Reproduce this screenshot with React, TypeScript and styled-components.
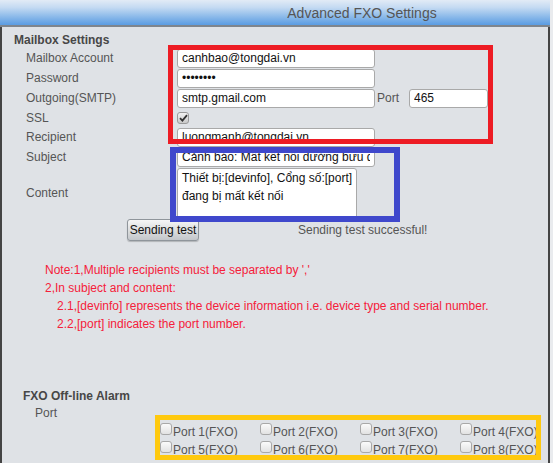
import React from 'react';
import styled, { createGlobalStyle } from 'styled-components';

const GlobalStyle = createGlobalStyle`
  html, body {
    margin: 0;
    padding: 0;
    background: #e9ebee;
    overflow: hidden;
  }
  body {
    font-family: 'Liberation Sans', Arial, sans-serif;
    font-size: 12px;
    color: #555;
  }
`;

const Page = styled.div`
  position: relative;
  width: 550px;
  height: 463px;
  display: flex;
  flex-direction: column;
  overflow: hidden;
`;

const Header = styled.div`
  flex: none;
  height: 23px;
  padding: 2px 0 0 174px;
  border-bottom: 2px solid #7e858d;
  background: linear-gradient(#e2ebf6 0%, #c4daf2 30%, #8ebbea 65%, #5a9ce2 100%);
  color: #555;
  font-size: 14px;
  line-height: 23px;
  text-align: center;
`;

const Panel = styled.div`
  flex: 1;
  background: #dfe2e6;
  border-left: 2px solid #444;
  border-right: 2px solid #444;
`;

const SectionTitle = styled.div<{ $indent: number; $top: number }>`
  padding-left: ${p => p.$indent}px;
  margin-top: ${p => p.$top}px;
  font-weight: bold;
  color: #474747;
  line-height: 16px;
`;

const Form = styled.div`
  display: flex;
  flex-direction: column;
  padding-left: 24px;
`;

const Row = styled.div<{ $h: number }>`
  display: flex;
  align-items: center;
  height: ${p => p.$h}px;
`;

const Label = styled.span`
  flex: none;
  width: 151px;
  color: #555;
`;

const TextInput = styled.input<{ $w: number }>`
  box-sizing: border-box;
  width: ${p => p.$w}px;
  height: 19px;
  margin: 0;
  padding: 0 4px;
  border: 1px solid #a9a9a9;
  border-radius: 3px;
  background: #fff;
  font-family: 'Liberation Sans', Arial, sans-serif;
  font-size: 12px;
  color: #111;
  outline: none;
`;

const Area = styled.textarea`
  box-sizing: border-box;
  width: 180px;
  height: 51px;
  margin: 0;
  padding: 0 4px;
  border: 1px solid #a9a9a9;
  border-radius: 3px;
  background: #fff;
  font-family: 'Liberation Sans', Arial, sans-serif;
  font-size: 12px;
  line-height: 18px;
  color: #111;
  resize: none;
  overflow: hidden;
  white-space: pre;
  outline: none;
`;

const PortLabel = styled.span`
  width: 32px;
  margin-left: 2px;
  color: #555;
`;

const Box = styled.span<{ $checked?: boolean }>`
  box-sizing: border-box;
  flex: none;
  display: inline-flex;
  align-items: center;
  justify-content: center;
  width: 12px;
  height: 12px;
  border: 1px solid ${p => (p.$checked ? '#9a9a9a' : '#a8a8a8')};
  border-radius: 3px;
  background: ${p =>
    p.$checked ? 'linear-gradient(#f2f2f2, #c9c9c9)' : 'linear-gradient(#fbfbfb, #e2e2e2)'};
`;

const Check = ({ checked }: { checked?: boolean }) => (
  <Box $checked={checked}>
    {checked && (
      <svg width="9" height="8" viewBox="0 0 9 8">
        <path d="M1 4.2 L3.4 6.6 L8 1.2" fill="none" stroke="#333" strokeWidth="1.8" />
      </svg>
    )}
  </Box>
);

const ButtonRow = styled.div`
  display: flex;
  align-items: center;
  height: 22px;
  padding-left: 125px;
`;

const Button = styled.button`
  box-sizing: border-box;
  width: 72px;
  height: 22px;
  padding: 0;
  border: 1px solid #8f959b;
  border-radius: 3px;
  background: linear-gradient(#f6f6f6, #dadcde 55%, #c3c6ca);
  box-shadow: 0 1px 1px rgba(0, 0, 0, 0.2);
  font-family: 'Liberation Sans', Arial, sans-serif;
  font-size: 12px;
  color: #111;
`;

const Status = styled.span`
  margin-left: 99px;
  color: #555;
`;

const Notes = styled.div`
  margin-top: 20px;
  padding-left: 43px;
  color: #f5203a;
  line-height: 18px;
`;

const NoteLine = styled.div<{ $sub?: boolean }>`
  padding-left: ${p => (p.$sub ? 12 : 0)}px;
  white-space: nowrap;
`;

const PortTitle = styled.div`
  padding-left: 33px;
  line-height: 18px;
  color: #555;
`;

const PortGrid = styled.div`
  display: grid;
  grid-template-columns: repeat(3, 100px) 1fr;
  grid-auto-rows: 18px;
  margin: 1px 0 0 158px;
`;

const PortItem = styled.label`
  display: flex;
  align-items: center;
  gap: 1px;
  color: #555;
  white-space: nowrap;
  & > span:first-child {
    margin-top: -6px;
  }
`;

const Annot = styled.div<{ $x: number; $y: number; $w: number; $h: number; $c: string; $b: number }>`
  position: absolute;
  left: ${p => p.$x}px;
  top: ${p => p.$y}px;
  width: ${p => p.$w}px;
  height: ${p => p.$h}px;
  box-sizing: border-box;
  border: ${p => p.$b}px solid ${p => p.$c};
  pointer-events: none;
`;

const ports = [1, 2, 3, 4, 5, 6, 7, 8];

export default function App() {
  return (
    <Page>
      <GlobalStyle />
      <Header>Advanced FXO Settings</Header>
      <Panel>
        <SectionTitle $indent={12} $top={5}>Mailbox Settings</SectionTitle>
        <Form>
          <Row $h={20}>
            <Label>Mailbox Account</Label>
            <TextInput $w={198} defaultValue="canhbao@tongdai.vn" />
          </Row>
          <Row $h={20}>
            <Label>Password</Label>
            <TextInput $w={198} type="password" defaultValue="12345678" />
          </Row>
          <Row $h={20}>
            <Label>Outgoing(SMTP)</Label>
            <TextInput $w={198} defaultValue="smtp.gmail.com" />
            <PortLabel>Port</PortLabel>
            <TextInput $w={79} defaultValue="465" />
          </Row>
          <Row $h={19}>
            <Label>SSL</Label>
            <Check checked />
          </Row>
          <Row $h={20}>
            <Label>Recipient</Label>
            <TextInput $w={198} defaultValue="luongmanh@tongdai.vn" />
          </Row>
          <Row $h={20}>
            <Label>Subject</Label>
            <TextInput $w={198} defaultValue="Cảnh báo: Mất kết nối đường bưu điện" />
          </Row>
          <Row $h={52}>
            <Label>Content</Label>
            <Area defaultValue={'Thiết bị:[devinfo], Cổng số:[port]\nđang bị mất kết nối'} />
          </Row>
        </Form>
        <ButtonRow>
          <Button>Sending test</Button>
          <Status>Sending test successful!</Status>
        </ButtonRow>
        <Notes>
          <NoteLine>Note:1,Multiple recipients must be separated by ','</NoteLine>
          <NoteLine>2,In subject and content:</NoteLine>
          <NoteLine $sub>2.1,[devinfo] represents the device information i.e. device type and serial number.</NoteLine>
          <NoteLine $sub>2.2,[port] indicates the port number.</NoteLine>
        </Notes>
        <SectionTitle $indent={21} $top={55}>FXO Off-line Alarm</SectionTitle>
        <PortTitle>Port</PortTitle>
        <PortGrid>
          {ports.map(n => (
            <PortItem key={n}>
              <Check />
              <span>Port {n}(FXO)</span>
            </PortItem>
          ))}
        </PortGrid>
      </Panel>
      <Annot $x={168} $y={45} $w={325} $h={99} $c="#ed1c24" $b={5} />
      <Annot $x={170} $y={147} $w={230} $h={75} $c="#3f48cc" $b={6} />
      <Annot $x={155} $y={415} $w={386} $h={45} $c="#ffc90e" $b={5} />
    </Page>
  );
}
